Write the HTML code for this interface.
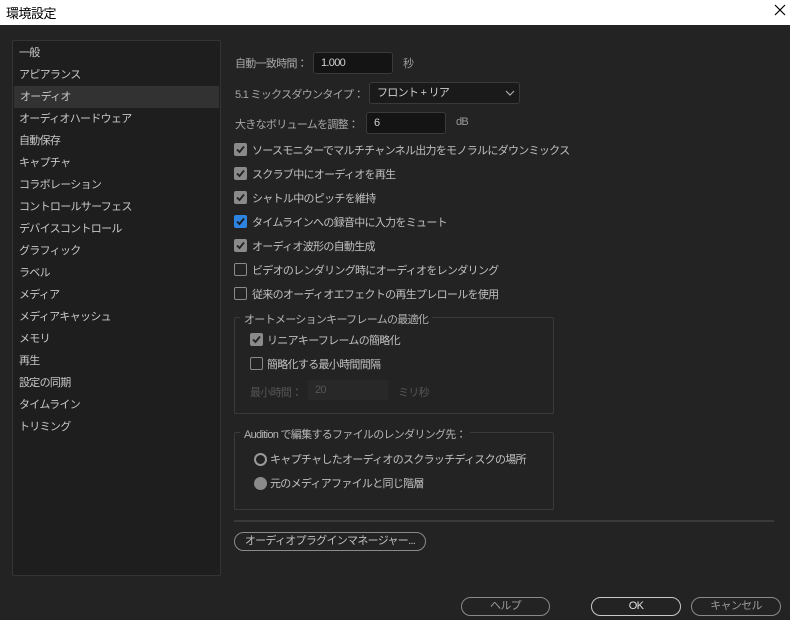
<!DOCTYPE html>
<html><head><meta charset="utf-8"><style>
*{margin:0;padding:0;box-sizing:border-box}
body{width:790px;height:620px;background:#232323;font-family:"Liberation Sans","Noto Sans CJK JP",sans-serif;font-size:11px;color:#b4b4b4;position:relative;overflow:hidden;letter-spacing:-0.7px}
.a{position:absolute;white-space:nowrap}
.title{position:absolute;left:0;top:0;width:790px;height:25px;background:#fff;color:#000;font-size:13px;letter-spacing:-0.5px}
.list{position:absolute;left:12px;top:40px;width:209px;height:536px;background:#1e1e1e;border:1px solid #343434;border-radius:2px}
.list div{height:22px;line-height:22px;padding-left:6px;color:#c8c8c8;font-size:11px}
.list .sel{background:#323232;margin:0 1px}
.inp{position:absolute;background:#141414;border:1px solid #3a3a3a;border-radius:3px;color:#d0d0d0;padding-left:7px;line-height:20px;height:22px}
.cb{position:absolute;width:13px;height:13px;border-radius:2px}
.cb.on{background:#8a8a8a}
.cb.blue{background:#2d84e0}
.cb.off{border:1.5px solid #8a8a8a}
.cb svg{position:absolute;left:1px;top:1px}
.grp{position:absolute;border:1px solid #3a3a3a;border-radius:2px}
.btn{position:absolute;border:1.5px solid #8a8a8a;border-radius:10px;height:19px;line-height:16px;text-align:center;color:#9a9a9a}
.t{margin-top:-1px}
</style></head><body>
<div class="title"><span class="a" style="left:6px;top:3px">環境設定</span>
<svg class="a" style="left:774px;top:4px" width="12" height="12"><path d="M1 1L11 11M11 1L1 11" stroke="#000" stroke-width="1.2"/></svg></div>
<div class="list" style="padding-top:1px">
<div>一般</div><div>アピアランス</div><div class="sel">オーディオ</div><div>オーディオハードウェア</div><div>自動保存</div><div>キャプチャ</div><div>コラボレーション</div><div>コントロールサーフェス</div><div>デバイスコントロール</div><div>グラフィック</div><div>ラベル</div><div>メディア</div><div>メディアキャッシュ</div><div>メモリ</div><div>再生</div><div>設定の同期</div><div>タイムライン</div><div>トリミング</div>
</div>
<span class="a" style="left:235px;top:55px;color:#a8a8a8">自動一致時間：</span>
<div class="inp" style="left:313px;top:52px;width:80px">1.000</div>
<span class="a" style="left:403px;top:55px;color:#9a9a9a">秒</span>
<span class="a" style="left:235px;top:86px;color:#a8a8a8">5.1 ミックスダウンタイプ：</span>
<div class="inp" style="left:369px;top:82px;width:151px;background:#1a1a1a;color:#d0d0d0">フロント + リア</div>
<svg class="a" style="left:505px;top:89px" width="10" height="8"><path d="M1 2L5 6L9 2" stroke="#aaa" fill="none" stroke-width="1.2"/></svg>
<span class="a" style="left:235px;top:116px;color:#a8a8a8">大きなボリュームを調整：</span>
<div class="inp" style="left:366px;top:112px;width:80px">6</div>
<span class="a" style="left:456px;top:116px;color:#9a9a9a">dB</span>

<div class="cb on" style="left:234px;top:143px"><svg width="11" height="11"><path d="M2 5.5L4.5 8L9 2.5" stroke="#222" stroke-width="1.8" fill="none"/></svg></div>
<span class="a t" style="left:252px;top:143px;color:#c0c0c0">ソースモニターでマルチチャンネル出力をモノラルにダウンミックス</span>
<div class="cb on" style="left:234px;top:167px"><svg width="11" height="11"><path d="M2 5.5L4.5 8L9 2.5" stroke="#222" stroke-width="1.8" fill="none"/></svg></div>
<span class="a t" style="left:252px;top:167px;color:#c0c0c0">スクラブ中にオーディオを再生</span>
<div class="cb on" style="left:234px;top:191px"><svg width="11" height="11"><path d="M2 5.5L4.5 8L9 2.5" stroke="#222" stroke-width="1.8" fill="none"/></svg></div>
<span class="a t" style="left:252px;top:191px;color:#c0c0c0">シャトル中のピッチを維持</span>
<div class="cb blue" style="left:234px;top:215px"><svg width="11" height="11"><path d="M2 5.5L4.5 8L9 2.5" stroke="#1a1a1a" stroke-width="1.8" fill="none"/></svg></div>
<span class="a t" style="left:252px;top:215px;color:#c0c0c0">タイムラインへの録音中に入力をミュート</span>
<div class="cb on" style="left:234px;top:239px"><svg width="11" height="11"><path d="M2 5.5L4.5 8L9 2.5" stroke="#222" stroke-width="1.8" fill="none"/></svg></div>
<span class="a t" style="left:252px;top:239px;color:#c0c0c0">オーディオ波形の自動生成</span>
<div class="cb off" style="left:234px;top:263px"></div>
<span class="a t" style="left:252px;top:263px;color:#c0c0c0">ビデオのレンダリング時にオーディオをレンダリング</span>
<div class="cb off" style="left:234px;top:287px"></div>
<span class="a t" style="left:252px;top:287px;color:#c0c0c0">従来のオーディオエフェクトの再生プレロールを使用</span>

<div class="grp" style="left:234px;top:317px;width:320px;height:97px"></div>
<span class="a" style="left:240px;top:311px;background:#232323;padding:0 4px;color:#b4b4b4">オートメーションキーフレームの最適化</span>
<div class="cb on" style="left:250px;top:333px"><svg width="11" height="11"><path d="M2 5.5L4.5 8L9 2.5" stroke="#222" stroke-width="1.8" fill="none"/></svg></div>
<span class="a t" style="left:267px;top:333px;color:#c0c0c0">リニアキーフレームの簡略化</span>
<div class="cb off" style="left:250px;top:357px"></div>
<span class="a t" style="left:267px;top:357px;color:#c0c0c0">簡略化する最小時間間隔</span>
<span class="a" style="left:250px;top:384px;color:#555">最小時間：</span>
<div class="a" style="left:308px;top:380px;width:80px;height:20px;background:#282828;color:#555;padding-left:7px;line-height:20px">20</div>
<span class="a" style="left:398px;top:384px;color:#555">ミリ秒</span>

<div class="grp" style="left:234px;top:432px;width:320px;height:78px"></div>
<span class="a" style="left:240px;top:426px;background:#232323;padding:0 4px;color:#b4b4b4">Audition で編集するファイルのレンダリング先：</span>
<div class="a" style="left:254px;top:453px;width:13px;height:13px;border-radius:50%;border:2px solid #9a9a9a"></div>
<span class="a t" style="left:270px;top:452px;color:#c0c0c0">キャプチャしたオーディオのスクラッチディスクの場所</span>
<div class="a" style="left:254px;top:477px;width:13px;height:13px;border-radius:50%;background:#8a8a8a"></div>
<span class="a t" style="left:270px;top:476px;color:#c0c0c0">元のメディアファイルと同じ階層</span>

<div class="a" style="left:234px;top:520px;width:540px;height:2px;background:#3a3a3a"></div>
<div class="btn" style="left:234px;top:532px;width:192px;color:#c0c0c0">オーディオプラグインマネージャー...</div>

<div class="btn" style="left:461px;top:597px;width:89px">ヘルプ</div>
<div class="btn" style="left:591px;top:597px;width:90px;color:#e0e0e0;border-color:#c8c8c8">OK</div>
<div class="btn" style="left:691px;top:597px;width:90px">キャンセル</div>
</body></html>
